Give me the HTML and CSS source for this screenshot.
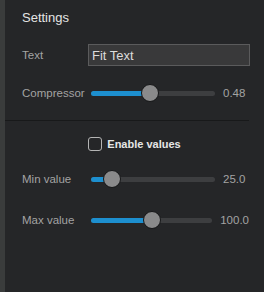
FILE: index.html
```html
<!DOCTYPE html>
<html lang="en">
<head>
  <meta charset="UTF-8">
  <link rel="stylesheet" href="styles.css">
  <title>Settings</title>
</head>
<body>
  <div class="side">
    <div class="panel">
      <div class="title">Settings</div>

      <div class="row inputRow">
        <span class="label">Text</span>
        <input class="textField" type="text" value="Fit Text">
      </div>

      <div class="row sliderRow first">
        <span class="label">Compressor</span>
        <div class="track">
          <div class="fill" style="width: 47.6%"></div>
          <div class="thumb" style="left: 47.6%"></div>
        </div>
        <span class="value">0.48</span>
      </div>

      <div class="sep"></div>

      <div class="checkRow">
        <span class="box"></span>
        <span class="checkText">Enable values</span>
      </div>

      <div class="row sliderRow min">
        <span class="label">Min value</span>
        <div class="track">
          <div class="fill" style="width: 17%"></div>
          <div class="thumb" style="left: 17%"></div>
        </div>
        <span class="value">25.0</span>
      </div>

      <div class="row sliderRow max">
        <span class="label">Max value</span>
        <div class="track">
          <div class="fill" style="width: 50%"></div>
          <div class="thumb" style="left: 50%"></div>
        </div>
        <span class="value">100.0</span>
      </div>
    </div>
  </div>
</body>
</html>
```

FILE: styles.css
```css
html, body {
  margin: 0;
  height: 100%;
  background-color: #252628;
  font-family: "Liberation Sans", Arial, Helvetica, sans-serif;
}

.side {
  height: 100%;
  border-left: 5px solid #3a3c3c;
  box-sizing: border-box;
}

.panel {
  width: 244px;
  padding-top: 8px;
}

.title {
  padding-left: 17px;
  line-height: 20px;
  font-size: 13px;
  color: #e4e4e4;
}

.row {
  display: flex;
  align-items: center;
  padding-left: 17px;
}

.label {
  width: 66px;
  font-size: 11.5px;
  color: #a3a3a3;
  flex-shrink: 0;
}

.inputRow {
  margin-top: 16px;
}

.textField {
  width: 162px;
  height: 22px;
  box-sizing: border-box;
  margin: 0;
  padding: 0 3px;
  background-color: #39393a;
  border: 1px solid #5b5b5c;
  border-radius: 0;
  font-family: "Liberation Sans", Arial, sans-serif;
  font-size: 13px;
  color: #dcdcdc;
  outline: none;
}

.sliderRow {
  height: 20px;
}

.sliderRow.first { margin-top: 17px; }
.sliderRow.min { margin-top: 17px; }
.sliderRow.max { margin-top: 21px; }

.track {
  position: relative;
  width: 124px;
  height: 5px;
  margin-left: 3px;
  border-radius: 3px;
  background-color: #3d3e40;
}

.fill {
  height: 100%;
  border-radius: 3px;
  background-color: #1d8fcf;
}

.thumb {
  position: absolute;
  top: 50%;
  width: 16px;
  height: 16px;
  margin: -9px 0 0 -9px;
  border: 1px solid #151617;
  border-radius: 50%;
  background-color: #8a8a8b;
}

.value {
  margin-left: 8px;
  font-size: 11.5px;
  color: #a3a3a3;
}

.sep {
  margin-top: 17px;
  height: 1px;
  background-color: #18191a;
}

.checkRow {
  display: flex;
  align-items: center;
  justify-content: center;
  gap: 5px;
  width: 259px;
  margin-top: 15px;
  height: 16px;
}

.box {
  width: 12px;
  height: 12px;
  border: 1px solid #b4b4b4;
  border-radius: 3px;
}

.checkText {
  font-size: 11px;
  font-weight: bold;
  color: #e6e6e6;
}
```
